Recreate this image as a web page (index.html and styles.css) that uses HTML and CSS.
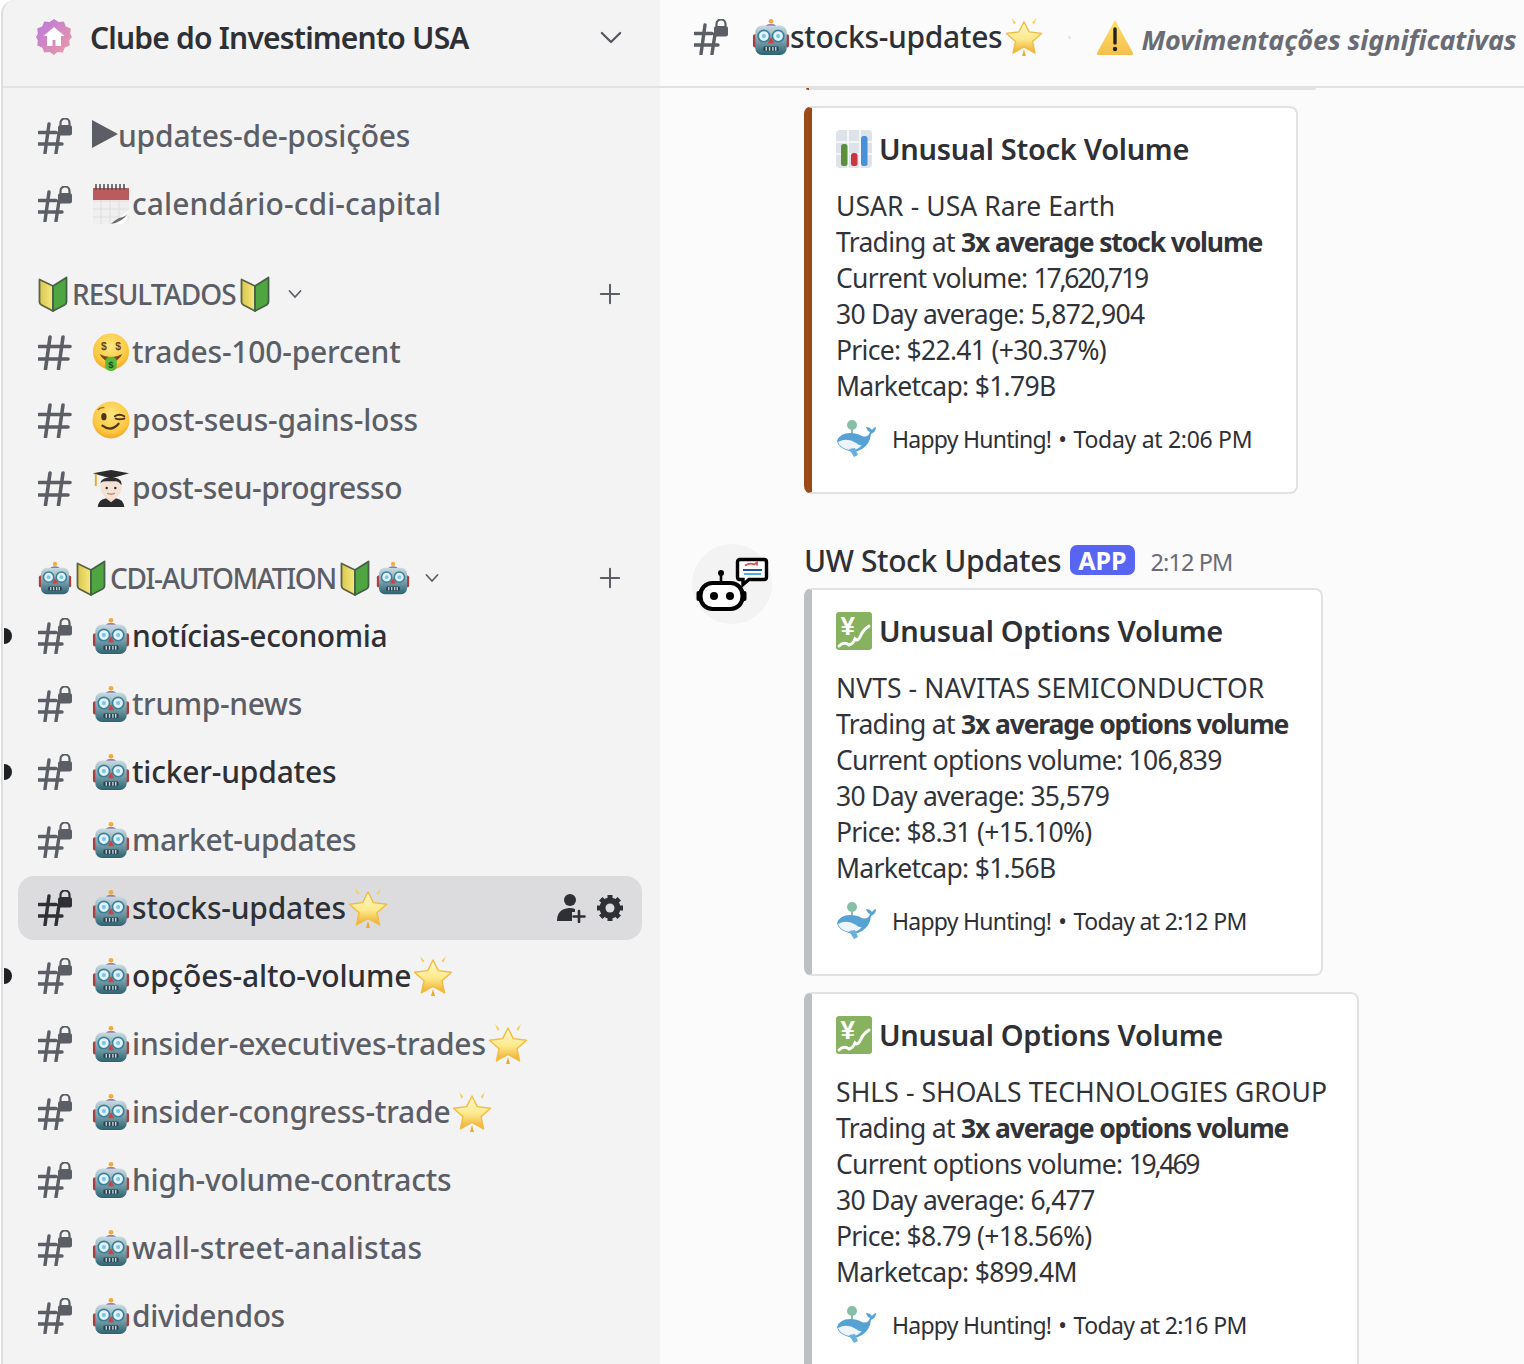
FILE: index.html
```html
<!DOCTYPE html>
<html lang="pt">
<head>
<meta charset="utf-8">
<title>stocks-updates</title>
<link rel="stylesheet" href="styles.css">
</head>
<body>
<svg class="defs" width="0" height="0" aria-hidden="true">
  <defs>
    <linearGradient id="rb" x1="0" y1="0" x2="0" y2="1"><stop offset="0" stop-color="#c8dae0"/><stop offset=".5" stop-color="#7fa3ae"/><stop offset="1" stop-color="#2a6272"/></linearGradient>
    <linearGradient id="st" x1="0" y1="0" x2="0" y2="1"><stop offset="0" stop-color="#fff9d0"/><stop offset=".55" stop-color="#fde98a"/><stop offset="1" stop-color="#eea92c"/></linearGradient>
    <radialGradient id="fc" cx=".5" cy=".35" r=".7"><stop offset="0" stop-color="#ffe680"/><stop offset=".7" stop-color="#fcc63e"/><stop offset="1" stop-color="#ee9a1e"/></radialGradient>
    <linearGradient id="bd" x1="0" y1="0" x2="1" y2="1"><stop offset="0" stop-color="#b877e0"/><stop offset="1" stop-color="#ee9ba0"/></linearGradient>
    <linearGradient id="wl" x1="0" y1="0" x2="0" y2="1"><stop offset="0" stop-color="#ffe169"/><stop offset="1" stop-color="#f4bf4d"/></linearGradient>
    <linearGradient id="sy" x1="0" y1="0" x2="1" y2="0"><stop offset="0" stop-color="#d9c84e"/><stop offset="1" stop-color="#f6e87e"/></linearGradient>
    <symbol id="hash" viewBox="0 0 34 36"><path d="M1 12.500H32M0 25H30M12 3 7.500 35M25 3 20.500 35" fill="none" stroke="currentColor" stroke-width="3.600" stroke-linecap="round"/></symbol>
    <symbol id="hashlock" viewBox="0 0 34 36"><path d="M1 14.500H18M0 26H24M11 6 7 35M21 15 18 35" fill="none" stroke="currentColor" stroke-width="3.400" stroke-linecap="round"/><path d="M22.500 7.500V5a4.500 4.500 0 0 1 9 0V7.500" fill="none" stroke="currentColor" stroke-width="2.200"/><rect x="20" y="7" width="14" height="10.500" rx="2.500" fill="currentColor"/></symbol>
    <symbol id="robot" viewBox="0 0 40 40"><circle cx="20" cy="3.500" r="2.500" fill="#f4a93a"/><path d="M15 8c0-2 10-2 10 0v2H15z" fill="#7a5aa0"/><rect x="1" y="17" width="5" height="14" rx="2" fill="#a9403f"/><rect x="34" y="17" width="5" height="14" rx="2" fill="#a9403f"/><rect x="3.500" y="8" width="33" height="31" rx="7" fill="url(#rb)"/><circle cx="12.500" cy="19" r="6" fill="#dff3fb" stroke="#3c7f9a" stroke-width="1.800"/><circle cx="27.500" cy="19" r="6" fill="#dff3fb" stroke="#3c7f9a" stroke-width="1.800"/><circle cx="12.500" cy="19" r="2.200" fill="#7fc4e0"/><circle cx="27.500" cy="19" r="2.200" fill="#7fc4e0"/><path d="M20 20l3.500 6.500h-7z" fill="#c9453e"/><rect x="12" y="30" width="16" height="5" rx="1.500" fill="#25434c"/><path d="M15 30.500v4M18.500 30.500v4M22 30.500v4M25 30.500v4" stroke="#c7d4d8" stroke-width="1.500"/></symbol>
    <symbol id="star" viewBox="0 0 40 40"><path d="M20 4l5.300 10.600 13.200 1.600-9.500 8.600 2.600 12.200L20 30.500 8.400 37l2.600-12.200-9.500-8.600 13.200-1.600z" fill="url(#st)" stroke="#f2bb3f" stroke-width="1.400" stroke-linejoin="round"/><path d="M7 0l4.500 5-2 1.800zM33 0l-4.500 5 2 1.800z" fill="#f4cf58"/><path d="M18 40l2-7 2 7z" fill="#eea92c"/></symbol>
    <symbol id="shield" viewBox="0 0 30 36"><path d="M1.500 3.500 15 10v25L3.500 29Q1.500 28 1.500 26z" fill="url(#sy)" stroke="#5d6145" stroke-width="1.800" stroke-linejoin="round"/><path d="M28.500 1.500 15 10v25l11.500-6q2-1 2-3z" fill="#4fa53f" stroke="#45604a" stroke-width="1.800" stroke-linejoin="round"/></symbol>
    <symbol id="cal" viewBox="0 0 38 40"><rect x="1" y="3" width="36" height="37" fill="#efefef"/><path d="M1 17H37M1 25H37M1 33H37M9 13V40M18 13V40M27 13V40" stroke="#dedede" stroke-width="1"/><rect x="1" y="4" width="36" height="12" fill="#b85c5e"/><path d="M4 0v6M8 0v6M12 0v6M16 0v6M20 0v6M24 0v6M28 0v6M32 0v6" stroke="#4b4b4f" stroke-width="1.500"/><path d="M37 26 19 40h12q5-5 6-14z" fill="#fbfbfb"/><path d="M37 28Q31 38 19 40q6-6 10-6.500 5-1 8-5.500z" fill="#6f6f6f"/></symbol>
    <symbol id="money" viewBox="0 0 40 40"><circle cx="20" cy="19.500" r="19" fill="url(#fc)"/><text x="12.500" y="18" class="sy">$</text><text x="27.500" y="18" class="sy">$</text><path d="M8 22q12 7 24 0-4 8-12 8T8 22z" fill="#7a4a1c"/><rect x="14" y="25" width="12" height="15" rx="5" fill="#5cb83c"/><text x="20" y="37" class="sg">$</text></symbol>
    <symbol id="wink" viewBox="0 0 40 40"><circle cx="20" cy="20" r="19.500" fill="url(#fc)"/><ellipse cx="12.500" cy="16.500" rx="2.800" ry="3.800" fill="#4e3418"/><path d="M24 16q5-3 10 0M25 18.500q4 1.500 9 0" fill="none" stroke="#4e3418" stroke-width="2" stroke-linecap="round"/><path d="M6 9.500q3-3 7-2.500" fill="none" stroke="#a8691c" stroke-width="1.500"/><path d="M11 26q9 7 17-2" fill="none" stroke="#4e3418" stroke-width="2.400" stroke-linecap="round"/></symbol>
    <symbol id="grad" viewBox="0 0 40 40"><path d="M6 40q1-8 8-9h12q7 1 8 9z" fill="#2b2b2d"/><path d="M15 31l5 4 5-4v-5H15z" fill="#f2d8c6"/><ellipse cx="20" cy="19.500" rx="11" ry="12" fill="#f6e2d4"/><path d="M9 17q-1-8 11-8t11 8q-3-4-6-4t-10 0-6 4z" fill="#2f2f31"/><circle cx="15.500" cy="20" r="1.300" fill="#333"/><circle cx="24.500" cy="20" r="1.300" fill="#333"/><path d="M16 25.500q4 2 8 0" fill="none" stroke="#a76" stroke-width="1.200"/><path d="M1 4.500 20 1l19 3.500L20 10z" fill="#2b2b2d"/><path d="M4 5v13" stroke="#e6a92e" stroke-width="2"/></symbol>
    <symbol id="chart" viewBox="0 0 36 38"><rect width="36" height="38" rx="4" fill="#dde3e9"/><path d="M0 12H36M0 24H36M12 0V38M24 0V38" stroke="#f3f5f7" stroke-width="2"/><rect x="5" y="14" width="6.500" height="22" rx="2.500" fill="#5a8f3c"/><rect x="15" y="23" width="6.500" height="13" rx="2.500" fill="#c9363f"/><rect x="25" y="6" width="6.500" height="30" rx="2.500" fill="#4a90d9"/></symbol>
    <symbol id="yen" viewBox="0 0 36 38"><rect width="36" height="38" rx="3" fill="#87b361"/><text x="11.500" y="23" class="yn">¥</text><path d="M3 34q5-5 10-1 4-1 6-6 3 3 6-4 2-5 8-9" fill="none" stroke="#fff" stroke-width="3" stroke-linecap="round"/></symbol>
    <symbol id="whale" viewBox="0 0 40 38"><circle cx="16" cy="5" r="5" fill="#86bfa6"/><path d="M15 9h2v6h-2z" fill="#86bfa6"/><path d="M1 21q3-8 13-8 7 0 12 3 6 2 8-4-3-1-4-5 4 0 6 3 2-3 4-3 0 5-5 7-1 10-9 15-6 4-13 2Q2 28 1 21z" fill="#57a2d4"/><path d="M2 22q9-5 18 1 4 3 6 2-6 7-13 5Q4 28 2 22z" fill="#eef5fa"/><path d="M13 29l5 8 4-2-3-7z" fill="#6aaedb"/></symbol>
    <symbol id="warn" viewBox="0 0 38 36"><path d="M19 1 37 34q.5 2-2 2H3q-2.500 0-2-2z" fill="url(#wl)"/><path d="M19 10v14" stroke="#222" stroke-width="3.400" stroke-linecap="round"/><circle cx="19" cy="30" r="2.200" fill="#222"/></symbol>
    <symbol id="bot" viewBox="0 0 80 80"><circle cx="40" cy="40" r="40" fill="#f3f3f4"/><path d="M29 30v8" stroke="#000" stroke-width="2.600"/><circle cx="29" cy="29" r="3" fill="#000"/><rect x="8.500" y="39" width="42" height="26" rx="12" fill="#fff" stroke="#000" stroke-width="4.200"/><circle cx="22" cy="52" r="4" fill="#000"/><circle cx="38" cy="52" r="4" fill="#000"/><rect x="4.500" y="47" width="4" height="10" rx="2" fill="#000"/><rect x="50.500" y="47" width="4" height="10" rx="2" fill="#000"/><path d="M45.500 18q0-2.500 2.500-2.500h24q2.500 0 2.500 2.500v15q0 2.500-2.500 2.500H57l-6 5v-5h-3q-2.500 0-2.500-2.500z" fill="#fff" stroke="#000" stroke-width="3.400"/><path d="M53 21.500q5-3 9-1l3-2v3" stroke="#d9534f" stroke-width="1.800" fill="none"/><path d="M51 26H70" stroke="#24528c" stroke-width="2"/><path d="M52 30H69" stroke="#3fa4d8" stroke-width="1.800"/></symbol>
    <symbol id="boost" viewBox="0 0 36 36"><path d="M18 0l4.500 3 5.300-.6 2 5 5 2-.6 5.300L36 18l-2.800 3.300.6 5.300-5 2-2 5-5.300-.6L18 36l-4.500-3-5.300.6-2-5-5-2 .6-5.300L0 18l1.800-3.300-.6-5.300 5-2 2-5 5.300.6z" fill="url(#bd)"/><path d="M18 8 7.500 17H11v10h5.500v-6h3v6H25V17h3.500z" fill="#fff"/></symbol>
    <symbol id="useradd" viewBox="0 0 30 30"><circle cx="14" cy="7" r="6" fill="currentColor"/><path d="M1 28q0-12 12-13 4 0 6 1v3h-3v9z" fill="currentColor"/><path d="M23 18v11M17.500 23.500h11" stroke="currentColor" stroke-width="2.600" stroke-linecap="round"/></symbol>
    <symbol id="gear" viewBox="0 0 30 30"><path d="M15 7.500a7.500 7.500 0 1 0 0 15 7.500 7.500 0 0 0 0-15z" fill="none" stroke="currentColor" stroke-width="6"/><path d="M15 2v26M2 15h26M5.800 5.800l18.400 18.400M24.200 5.800 5.800 24.200" stroke="currentColor" stroke-width="5"/><circle cx="15" cy="15" r="4.500" fill="#dcdcdf"/></symbol>
  </defs>
</svg>

<div class="app">
  <aside class="sidebar">
    <header class="server">
      <svg class="boost"><use href="#boost"/></svg>
      <span class="server-name">Clube do Investimento USA</span>
      <svg class="server-chev" viewBox="0 0 24 14"><path d="M2 2l10 10L22 2" fill="none" stroke="currentColor" stroke-width="2.400" stroke-linecap="round" stroke-linejoin="round"/></svg>
    </header>
    <nav class="channels">
      <a class="row"><svg class="hash"><use href="#hashlock"/></svg><span class="tri"></span><span class="name">updates-de-posições</span></a>
      <a class="row"><svg class="hash"><use href="#hashlock"/></svg><svg class="emo"><use href="#cal"/></svg><span class="name wide">calendário-cdi-capital</span></a>

      <div class="cat"><svg class="cat-emo"><use href="#shield"/></svg><span class="cat-name">RESULTADOS</span><svg class="cat-emo"><use href="#shield"/></svg><svg class="cat-chev" viewBox="0 0 14 10"><path d="M1.500 2 7 8l5.500-6" fill="none" stroke="currentColor" stroke-width="1.700" stroke-linecap="round"/></svg><svg class="cat-plus" viewBox="0 0 24 24"><path d="M12 2v20M2 12h20" stroke="currentColor" stroke-width="2.200" stroke-linecap="round"/></svg></div>
      <a class="row"><svg class="hash"><use href="#hash"/></svg><svg class="emo"><use href="#money"/></svg><span class="name">trades-100-percent</span></a>
      <a class="row"><svg class="hash"><use href="#hash"/></svg><svg class="emo"><use href="#wink"/></svg><span class="name">post-seus-gains-loss</span></a>
      <a class="row"><svg class="hash"><use href="#hash"/></svg><svg class="emo"><use href="#grad"/></svg><span class="name narrow">post-seu-progresso</span></a>

      <div class="cat auto"><svg class="cat-bot"><use href="#robot"/></svg><svg class="cat-emo"><use href="#shield"/></svg><span class="cat-name">CDI-AUTOMATION</span><svg class="cat-emo gap"><use href="#shield"/></svg><svg class="cat-bot"><use href="#robot"/></svg><svg class="cat-chev" viewBox="0 0 14 10"><path d="M1.500 2 7 8l5.500-6" fill="none" stroke="currentColor" stroke-width="1.700" stroke-linecap="round"/></svg><svg class="cat-plus" viewBox="0 0 24 24"><path d="M12 2v20M2 12h20" stroke="currentColor" stroke-width="2.200" stroke-linecap="round"/></svg></div>
      <a class="row unread"><svg class="hash"><use href="#hashlock"/></svg><svg class="emo"><use href="#robot"/></svg><span class="name narrow">notícias-economia</span></a>
      <a class="row"><svg class="hash"><use href="#hashlock"/></svg><svg class="emo"><use href="#robot"/></svg><span class="name narrow">trump-news</span></a>
      <a class="row unread"><svg class="hash"><use href="#hashlock"/></svg><svg class="emo"><use href="#robot"/></svg><span class="name">ticker-updates</span></a>
      <a class="row"><svg class="hash"><use href="#hashlock"/></svg><svg class="emo"><use href="#robot"/></svg><span class="name narrow">market-updates</span></a>
      <a class="row selected"><svg class="hash"><use href="#hashlock"/></svg><svg class="emo"><use href="#robot"/></svg><span class="name">stocks-updates</span><svg class="emo star"><use href="#star"/></svg><span class="actions"><svg class="act"><use href="#useradd"/></svg><svg class="act"><use href="#gear"/></svg></span></a>
      <a class="row unread"><svg class="hash"><use href="#hashlock"/></svg><svg class="emo"><use href="#robot"/></svg><span class="name">opções-alto-volume</span><svg class="emo star"><use href="#star"/></svg></a>
      <a class="row"><svg class="hash"><use href="#hashlock"/></svg><svg class="emo"><use href="#robot"/></svg><span class="name">insider-executives-trades</span><svg class="emo star"><use href="#star"/></svg></a>
      <a class="row"><svg class="hash"><use href="#hashlock"/></svg><svg class="emo"><use href="#robot"/></svg><span class="name">insider-congress-trade</span><svg class="emo star"><use href="#star"/></svg></a>
      <a class="row"><svg class="hash"><use href="#hashlock"/></svg><svg class="emo"><use href="#robot"/></svg><span class="name">high-volume-contracts</span></a>
      <a class="row"><svg class="hash"><use href="#hashlock"/></svg><svg class="emo"><use href="#robot"/></svg><span class="name wide">wall-street-analistas</span></a>
      <a class="row"><svg class="hash"><use href="#hashlock"/></svg><svg class="emo"><use href="#robot"/></svg><span class="name narrow">dividendos</span></a>
    </nav>
  </aside>

  <main class="main">
    <header class="topbar">
      <svg class="hash"><use href="#hashlock"/></svg>
      <svg class="emo"><use href="#robot"/></svg>
      <span class="top-name">stocks-updates</span>
      <svg class="emo star"><use href="#star"/></svg>
      <span class="top-dot"></span>
      <svg class="warn"><use href="#warn"/></svg>
      <em class="topic">Movimentações significativas</em>
    </header>
    <div class="feed">
      <div class="stub"></div>
      <article class="card w1 rust">
        <h3 class="title"><svg class="t-emo"><use href="#chart"/></svg>Unusual Stock Volume</h3>
        <p class="body"><span class="caps">USAR - USA Rare Earth</span><br>Trading at <b>3x average stock volume</b><br>Current volume: <span class="n">17,620,719</span><br>30 Day average: 5,872,904<br>Price: $22.41 (+30.37%)<br>Marketcap: $1.79B</p>
        <footer class="foot"><svg class="whale"><use href="#whale"/></svg><span class="happy">Happy Hunting!</span><i class="sep">•</i>Today at 2:06 PM</footer>
      </article>

      <section class="msg">
        <svg class="avatar"><use href="#bot"/></svg>
        <div class="msg-head"><span class="author">UW Stock Updates</span><span class="app-tag">APP</span><time class="time">2:12 PM</time></div>
      </section>

      <article class="card w2 gray">
        <h3 class="title"><svg class="t-emo"><use href="#yen"/></svg>Unusual Options Volume</h3>
        <p class="body"><span class="caps">NVTS - NAVITAS SEMICONDUCTOR</span><br>Trading at <b>3x average options volume</b><br>Current options volume: 106,839<br>30 Day average: 35,579<br>Price: $8.31 (+15.10%)<br>Marketcap: $1.56B</p>
        <footer class="foot"><svg class="whale"><use href="#whale"/></svg><span class="happy">Happy Hunting!</span><i class="sep">•</i><span class="stamp">Today at 2:12 PM</span></footer>
      </article>
      <article class="card w3 gray">
        <h3 class="title"><svg class="t-emo"><use href="#yen"/></svg>Unusual Options Volume</h3>
        <p class="body"><span class="caps">SHLS - SHOALS TECHNOLOGIES GROUP</span><br>Trading at <b>3x average options volume</b><br>Current options volume: <span class="n">19,469</span><br>30 Day average: 6,477<br>Price: $8.79 (+18.56%)<br>Marketcap: $899.4M</p>
        <footer class="foot"><svg class="whale"><use href="#whale"/></svg><span class="happy">Happy Hunting!</span><i class="sep">•</i><span class="stamp">Today at 2:16 PM</span></footer>
      </article>
    </div>
  </main>
</div>
</body>
</html>
```
FILE: styles.css
```css
* { box-sizing: border-box; }
html, body { margin: 0; padding: 0; background: #fff; }
body { font-family: "Noto Sans", "Open Sans", sans-serif; color: #2e3035; }
.defs { position: absolute; }
.sy { font: 700 11px "Liberation Sans", sans-serif; fill: #6b431a; text-anchor: middle; }
.sg { font: 700 10px "Liberation Sans", sans-serif; fill: #0c4f1c; text-anchor: middle; }
.yn { font: 700 26px "Liberation Sans", sans-serif; fill: #fff; text-anchor: middle; }

.app { display: flex; width: 1524px; height: 1364px; overflow: hidden; }

.sidebar { width: 659px; flex: none; background: #f3f3f4; border-left: 2px solid #dcdddf; margin-left: 1px; border-top-left-radius: 14px; overflow: hidden; }
.server { display: flex; align-items: center; height: 88px; padding: 0 38px 12px 33px; border-bottom: 2px solid #e1e2e4; }
.boost { width: 36px; height: 36px; flex: none; }
.server-name { margin-left: 18px; font-size: 30px; font-weight: 600; letter-spacing: -.8px; color: #2e3035; white-space: nowrap; }
.server-chev { width: 22px; height: 13px; margin-left: auto; color: #55575f; }

.channels { padding-top: 16px; }
.row { position: relative; display: flex; align-items: center; height: 64px; margin: 0 18px 4px 15px; padding: 0 17px 0 20px; border-radius: 16px; color: #5c5e66; font-size: 30px; font-weight: 500; }
.hash { width: 34px; height: 36px; flex: none; color: #5c5e66; margin-right: 20px; }
.emo { width: 38px; height: 40px; flex: none; margin-right: 2px; }
.star { width: 40px; margin-left: 2px; margin-right: 0; }
.name { white-space: nowrap; letter-spacing: -.2px; margin-top: -2px; }
.wide { letter-spacing: .1px; }
.narrow { letter-spacing: -.4px; }
.tri { width: 0; height: 0; flex: none; border-left: 26px solid #5c5e66; border-top: 14px solid transparent; border-bottom: 14px solid transparent; margin-top: -4px; }
.unread { color: #2e3035; }
.unread::before { content: ""; position: absolute; left: -14px; top: 24px; width: 8px; height: 16px; border-radius: 0 8px 8px 0; background: #1f2023; }
.unread .hash { color: #5c5e66; }
.selected { background: #dcdcdf; color: #2e3035; }
.selected .hash { color: #2e3035; }
.actions { display: flex; gap: 9px; margin-left: auto; }
.act { width: 30px; height: 30px; color: #2e3035; }

.cat { display: flex; align-items: center; height: 52px; margin: 32px 18px 0 15px; padding: 0 0 0 20px; color: #5c5e66; font-size: 28px; font-weight: 500; }
.cat-emo { width: 30px; height: 36px; flex: none; }
.cat-bot { width: 34px; height: 34px; flex: none; margin-right: 4px; }
.cat-emo.gap { margin-right: 6px; }
.cat-name { white-space: nowrap; margin: 0 4px; letter-spacing: -1px; }
.auto .cat-name { letter-spacing: -1.350px; }
.cat-chev { width: 14px; height: 10px; margin-left: 18px; flex: none; }
.auto .cat-chev { margin-left: 11px; }
.cat-plus { width: 22px; height: 22px; margin-left: auto; margin-right: 21px; flex: none; }

.main { flex: 1; min-width: 0; background: #fbfbfb; }
.topbar { display: flex; align-items: center; height: 88px; padding: 0 0 12px 34px; border-bottom: 2px solid #e1e2e4; white-space: nowrap; overflow: hidden; }
.topbar .hash { color: #5c5e66; margin-right: 24px; }
.topbar .emo { margin-right: 0; }
.topbar .star { width: 38px; margin-left: 3px; }
.top-name { font-size: 30px; font-weight: 500; letter-spacing: -.3px; color: #2e3035; margin-top: -2px; }
.top-dot { width: 3px; height: 3px; margin: 0 25px; background: #e4e4e6; border-radius: 50%; flex: none; }
.warn { width: 38px; height: 36px; flex: none; margin-right: 7px; }
.topic { font-size: 27px; font-weight: 700; color: #6a6c75; letter-spacing: -.1px; margin-top: 5px; }

.feed { padding-left: 144px; }
.stub { width: 510px; height: 2px; margin-left: 2px; background: #e1e2e4; border-left: 3px solid #9c4a1a; border-radius: 0 0 6px 6px; }
.card { height: 388px; margin-top: 16px; padding: 20px 0 0 24px; background: #fff; border: 2px solid #e1e2e4; border-left-width: 8px; border-radius: 8px; color: #2e3035; white-space: nowrap; }
.w1 { width: 494px; }
.w2 { width: 519px; }
.w3 { width: 555px; }
.rust { border-left-color: #9c4a1a; }
.gray { border-left-color: #bcc0c2; }
.title { display: flex; align-items: center; gap: 7px; height: 40px; margin: 0; font-size: 29px; font-weight: 600; letter-spacing: -.3px; }
.t-emo { width: 36px; height: 38px; flex: none; margin-top: 2px; }
.body { margin: 20px 0 0; font-size: 26.500px; line-height: 36px; letter-spacing: -.7px; color: #313338; }
.body b { font-weight: 700; letter-spacing: -1.150px; }
.caps { letter-spacing: .08px; }
.n { letter-spacing: -2.200px; }
.foot { display: flex; align-items: center; height: 38px; margin-top: 16px; font-size: 23px; letter-spacing: -.3px; }
.happy { letter-spacing: -.75px; }
.stamp { letter-spacing: -.65px; }
.whale { width: 40px; height: 38px; margin-right: 16px; flex: none; }
.sep { font-style: normal; margin: 0 7px; }

.msg { position: relative; height: 94px; padding-top: 48px; }
.avatar { position: absolute; left: -112px; top: 50px; width: 80px; height: 80px; }
.msg-head { display: flex; align-items: center; height: 36px; white-space: nowrap; }
.author { font-size: 30px; font-weight: 500; letter-spacing: -.4px; color: #2e3035; }
.app-tag { height: 30px; margin-left: 9px; padding: 0 8px; background: #5865f2; color: #fff; border-radius: 7px; font-size: 25px; font-weight: 700; line-height: 30px; }
.time { margin-left: 16px; margin-top: 4px; font-size: 23.500px; color: #6a6c75; letter-spacing: -.9px; }
.msg + .card { margin-top: 0; }
```
